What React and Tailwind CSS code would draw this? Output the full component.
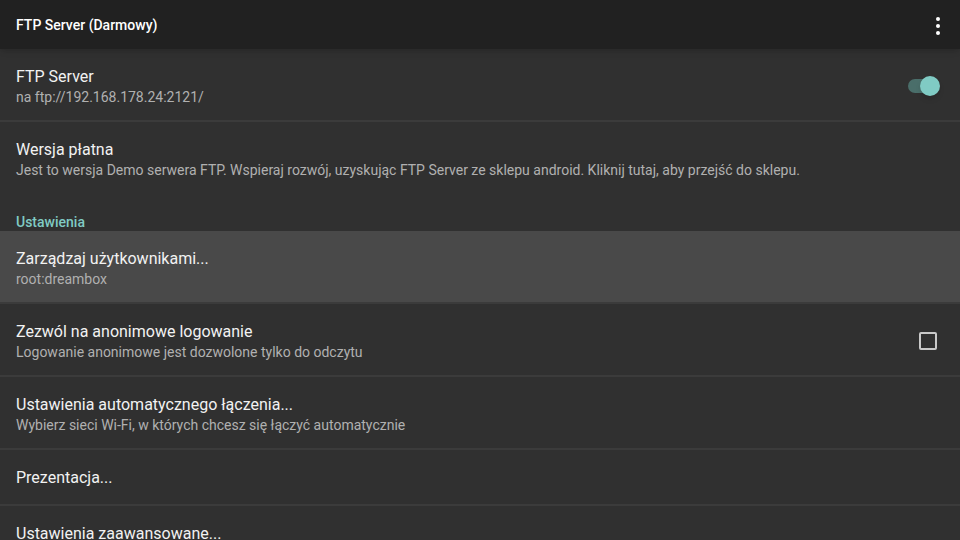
import React from "react";

const rows = [
  { title: "Zarządzaj użytkownikami...", sub: "root:dreambox", active: true },
  { title: "Zezwól na anonimowe logowanie", sub: "Logowanie anonimowe jest dozwolone tylko do odczytu", checkbox: true },
  { title: "Ustawienia automatycznego łączenia...", sub: "Wybierz sieci Wi-Fi, w których chcesz się łączyć automatycznie" },
  { title: "Prezentacja..." },
  { title: "Ustawienia zaawansowane..." },
];

const Toggle = () => (
  <div className="relative w-[32px] h-[20px] flex items-center">
    <div className="w-[30px] h-[14px] rounded-full bg-[#4a6e6a]" />
    <div className="absolute right-0 w-[20px] h-[20px] rounded-full bg-[#80cbc4] shadow-md" />
  </div>
);

const App = () => {
  return (
    <div
      className="w-[960px] h-[540px] overflow-hidden bg-[#303030] text-white"
      style={{ fontFamily: "Roboto, 'Liberation Sans', sans-serif" }}
    >
      <div className="h-[49px] bg-[#212121] flex items-center justify-between pl-4 pr-5 pt-[2px] shadow-md">
        <span className="text-[14px] font-medium text-white">FTP Server (Darmowy)</span>
        <div className="flex flex-col gap-[3px] items-center">
          <span className="w-[4px] h-[4px] rounded-full bg-white" />
          <span className="w-[4px] h-[4px] rounded-full bg-white" />
          <span className="w-[4px] h-[4px] rounded-full bg-white" />
        </div>
      </div>

      <div className="h-[73px] border-b-2 border-[#3b3b3b] flex items-center justify-between pl-4 pr-5 pt-[2px]">
        <div className="flex flex-col">
          <span className="text-[16px] leading-[22px] text-[#f2f2f2]">FTP Server</span>
          <span className="text-[14px] leading-[18px] text-[#b0b0b0]">na ftp://192.168.178.24:2121/</span>
        </div>
        <Toggle />
      </div>

      <div className="h-[72px] flex items-center pl-4 pr-5 pt-[2px]">
        <div className="flex flex-col">
          <span className="text-[16px] leading-[22px] text-[#f2f2f2]">Wersja płatna</span>
          <span className="text-[14px] leading-[18px] text-[#b0b0b0]">
            Jest to wersja Demo serwera FTP. Wspieraj rozwój, uzyskując FTP Server ze sklepu android. Kliknij tutaj, aby przejść do sklepu.
          </span>
        </div>
      </div>

      <div className="h-[37px] flex items-end pl-4">
        <span className="text-[14px] leading-[18px] font-medium text-[#80cbc4]">Ustawienia</span>
      </div>

      {rows.map((row, i) => (
        <div
          key={i}
          className={`${row.sub ? "h-[73px]" : "h-[56px]"} border-b-2 border-[#3b3b3b] flex items-center justify-between pl-4 pr-[23px] pt-[2px] ${
            row.active ? "bg-[#494949]" : ""
          }`}
        >
          <div className="flex flex-col">
            <span className="text-[16px] leading-[22px] text-[#f2f2f2]">{row.title}</span>
            {row.sub && <span className="text-[14px] leading-[18px] text-[#b0b0b0]">{row.sub}</span>}
          </div>
          {row.checkbox && <div className="w-[18px] h-[18px] border-2 border-[#c9c9c9] rounded-[2px]" />}
        </div>
      ))}
    </div>
  );
};

export default App;
